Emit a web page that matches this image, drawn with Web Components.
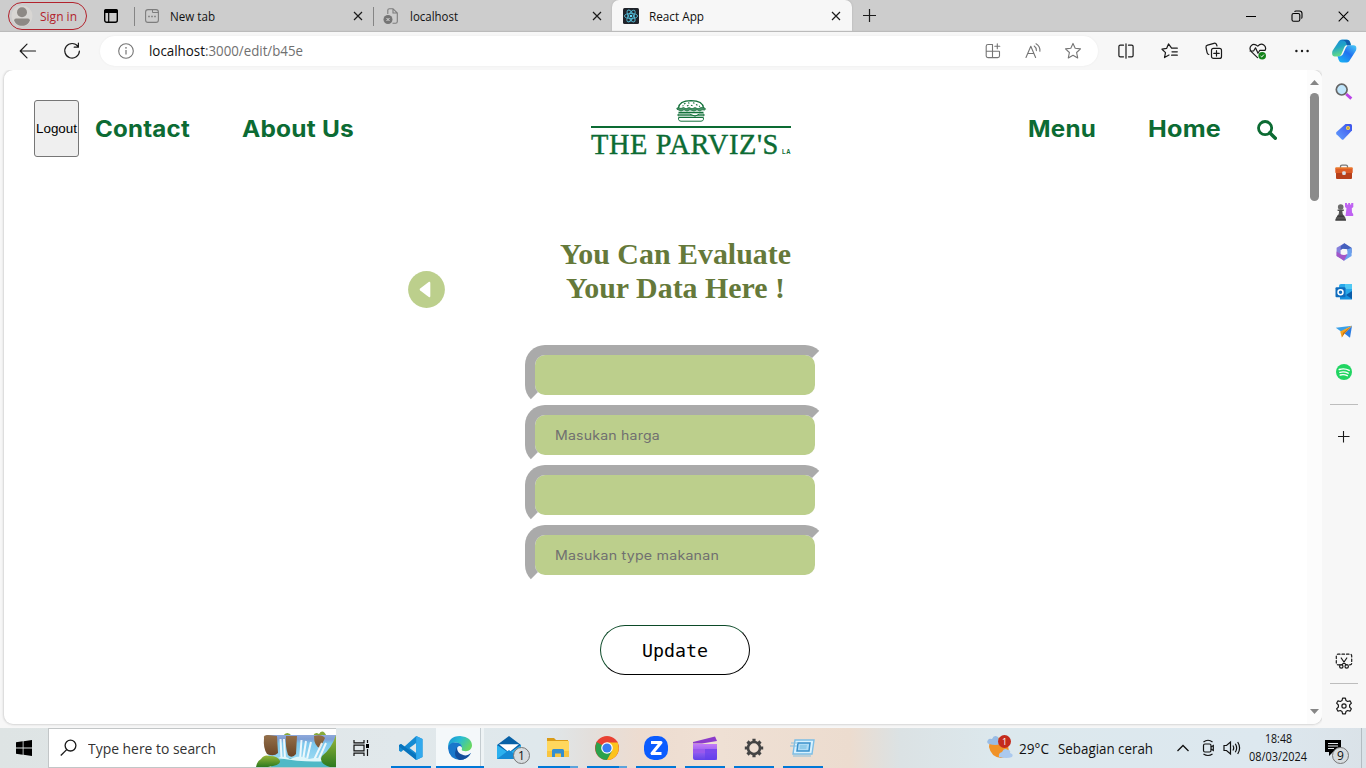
<!DOCTYPE html>
<html lang="en">
<head>
<meta charset="utf-8">
<title>React App</title>
<style>
html,body{margin:0;height:100%;overflow:hidden;background:#f7f7f7}
body{font-family:"Open Sans","Noto Sans",sans-serif}
</style>
</head>
<body>
<browser-window></browser-window>
<script>
/* Icon artwork: [width, height, markup] */
const S='fill="none" stroke="#1b1b1b" stroke-width="1.2" stroke-linecap="round" stroke-linejoin="round"';
const G='fill="none" stroke="#757575" stroke-width="1.1" stroke-linecap="round" stroke-linejoin="round"';
const ICONS={
avatar:[22,22,'<circle cx="11" cy="11" r="10.5" fill="#d8d6d3"/><circle cx="11" cy="7.3" r="5" fill="#8d8985"/><path d="M3.2 15.2Q3.2 13.6 5 13.6H17Q18.8 13.6 18.8 15.2C18 18.5 15 20.8 11 20.8S4 18.5 3.2 15.2Z" fill="#8d8985"/>'],
workspace:[16,16,'<rect x="1.7" y="1.7" width="12.6" height="12.6" rx="2" fill="none" stroke="#000" stroke-width="1.4"/><path d="M1 5V3Q1 1 3 1H13Q15 1 15 3V5Z"/><path d="M5.7 5V14.5" stroke="#000" stroke-width="1.2"/>'],
newtab:[14,14,'<rect x=".6" y=".6" width="12.8" height="12.8" rx="2.4" fill="none" stroke="#7d7d7d" stroke-width="1.1"/><path d="M7.5 .8V3.5H13.4" fill="none" stroke="#7d7d7d"/><path d="M3.2 7.5H4.8M6.2 7.5H7.8M9.2 7.5H10.8" stroke="#7d7d7d" stroke-width="1.5"/>'],
broken:[16,16,'<path d="M4.8 6V2.3Q4.8.7 6.4.7H10L14.3 5V13.4Q14.3 15.2 12.5 15.2H9.5M10 .8V5H14" fill="none" stroke="#7d7d7d" stroke-width="1.1"/><circle cx="5" cy="11.5" r="4.5" fill="#757575"/><path d="M3.5 10L6.5 13M6.5 10L3.5 13" stroke="#ddd"/>'],
react:[16,16,'<rect width="16" height="16" rx="1.5" fill="#20232a"/><g fill="none" stroke="#53b9d4" stroke-width=".9"><ellipse cx="8" cy="8" rx="6.6" ry="2.6"/><ellipse cx="8" cy="8" rx="6.6" ry="2.6" transform="rotate(60 8 8)"/><ellipse cx="8" cy="8" rx="6.6" ry="2.6" transform="rotate(120 8 8)"/></g><circle cx="8" cy="8" r="1.3" fill="#61dafb"/>'],
close:[10,10,'<path d="M1 1L9 9M9 1L1 9" stroke="#1b1b1b" stroke-width="1.2"/>'],
plus:[14,14,'<path d="M6.5 0V13M0 6.5H13" stroke="#1b1b1b" stroke-width="1.2"/>'],
plusS:[12,12,'<path d="M5.5 -.5V11.5M-.5 5.5H11.5" stroke="#1b1b1b" stroke-width="1.1"/>'],
min:[10,10,'<path d="M0 5.5H10" stroke="#000"/>'],
restore:[12,12,'<rect x="1" y="3.5" width="7.8" height="7.8" rx="1.6" fill="none" stroke="#000" stroke-width="1.1"/><path d="M3.5 1.6Q4 1 5 1H8.5Q11 1 11 3.5V7Q11 8 10.4 8.5" fill="none" stroke="#000" stroke-width="1.1"/>'],
winclose:[11,11,'<path d="M.7 .7L10.3 10.3M10.3 .7L.7 10.3" stroke="#000" stroke-width="1.1"/>'],
back:[18,16,`<path d="M16.5 8H1.5M8 1.2L1.2 8L8 14.8" ${S}/>`],
reload:[18,18,`<path d="M15 4.5A7.3 7.3 0 1 0 16.4 9M15.4 1.2V5.2H11.2" ${S} stroke-width="1.3"/>`],
info:[16,16,`<circle cx="8" cy="8" r="7.3" ${G}/><path d="M8 7V11.6" stroke="#757575" stroke-width="1.2"/><circle cx="8" cy="4.8" r=".85" fill="#757575"/>`],
apps:[16,16,`<path d="M7.5 1.5H3Q1.2 1.5 1.2 3.3V13Q1.2 14.6 3 14.6H12.6Q14.5 14.6 14.5 13V8.5M1.2 8.3H14.2M7.5 1.5V14.6M12.3 .8V5.8M9.8 3.3H14.8" ${G}/>`],
read:[16,16,`<path d="M1 14.5L5.8 3.2L10.6 14.5M2.8 10.5H8.8M9.2 3Q11.4 4.5 11.4 7.6M11 .8Q15.2 3 14.9 8.2" ${G} stroke-width="1.2"/>`],
star:[18,18,`<path d="M9 1.4L11.2 6.2L16.5 6.9L12.6 10.5L13.7 15.9L9 13.2L4.3 15.9L5.4 10.5L1.5 6.9L6.8 6.2Z" ${G} stroke-width="1.2"/>`],
split:[16,16,`<path d="M5.5 2.2H2.3Q.9 2.2 .9 3.6V12.4Q.9 13.8 2.3 13.8H5.5M10.5 2.2H13.7Q15.1 2.2 15.1 3.6V12.4Q15.1 13.8 13.7 13.8H10.5M8 .8V15.2" ${S}/>`],
favs:[18,16,`<path d="M16.3 5.2H10.6L7.5 .9L5.6 5.4L1 6.2L4.5 9.6L3.5 14.6L8 12M11 8.8H16.3M10.6 12.2H16.3" ${S}/>`],
collect:[18,18,`<rect x="6.5" y="6.4" width="10" height="10" rx="2" ${S}/><path d="M11.5 8.7V14.1M8.8 11.4H14.2M3.8 12.5Q2.4 12 2.1 10.6L1 5.5Q.7 3.6 2.6 3.1L9 1.3Q11 .9 11.6 2.8L12 4" ${S}/>`],
health:[18,18,`<path d="M8.5 15.6L2.3 9.6C-1 5.5 3.4-.4 8.8 4.1C13-.4 18.2 4.4 16 8.4M1 9H4.6L6.5 5.8L9 11.3L10.8 8.3H16" ${S}/><circle cx="13.2" cy="13.8" r="3.8" fill="#14841b"/><path d="M11.6 14L12.7 15L14.9 12.6" stroke="#fff" fill="none"/>`],
dots:[16,4,'<g fill="#1b1b1b"><circle cx="2.4" cy="2" r="1.2"/><circle cx="8" cy="2" r="1.2"/><circle cx="13.6" cy="2" r="1.2"/></g>'],
copilot:[26,24,'<defs><linearGradient id="a" x1="0" y1="0" x2=".3" y2="1"><stop stop-color="#1a88dc"/><stop offset=".5" stop-color="#22a6c4"/><stop offset="1" stop-color="#68dd83"/></linearGradient><linearGradient id="b" x1="0" y1="1" x2=".8" y2="0"><stop stop-color="#18bcf4"/><stop offset=".6" stop-color="#2172f0"/><stop offset="1" stop-color="#43bdf5"/></linearGradient></defs><path d="M8 2Q9 .5 11 .5H16Q18.5 .5 19.2 3L20 6H16.5Q14 6 13 9L10.5 15Q9.6 17.5 7 17.5H3.5Q.2 17 1.4 12Z" fill="url(#a)"/><path d="M9 1H16.5Q18.5 1 19.2 4L20 6.5H16L14.8 3Q13.6 1 9 1Z" fill="#135dad"/><path d="M18 22.5Q17 23.5 15.5 23.5H11Q8.5 23.5 7.7 21L6.5 17.2H9.3Q11.6 17 12.5 14L15 8.2Q16 6.2 18.5 6.2H22.5Q26.4 6.5 25 11.5Z" fill="url(#b)"/>'],
sbSearch:[18,18,'<path d="M11.2 11L16.3 15.6" stroke="#bb43e8" stroke-width="3"/><circle cx="6.7" cy="6.6" r="5.4" fill="#bfe5fb" stroke="#666" stroke-width="1.7"/>'],
tag:[18,18,'<defs><linearGradient id="t" x1="0" y1="1" x2="1" y2="0"><stop stop-color="#63a1ff"/><stop offset="1" stop-color="#3b4fea"/></linearGradient></defs><path d="M10.5 1H15.5Q17 1 17 2.5V7.5L8.7 16.3Q7.7 17.3 6.6 16.3L1.5 11.3Q.5 10.2 1.5 9.1Z" fill="url(#t)"/><circle cx="13" cy="5" r="2" fill="#ffda43"/><circle cx="13" cy="5" r=".8" fill="#8d5b36"/>'],
tools:[18,16,'<path d="M5.5 4V2.5Q5.5 1.2 7 1.2H11Q12.5 1.2 12.5 2.5V4" fill="none" stroke="#777" stroke-width="1.3"/><rect x=".3" y="3.6" width="17.4" height="5.6" rx="1" fill="#dd5c25"/><path d="M1 9H17V14Q17 15 16 15H2Q1 15 1 14Z" fill="#b7401a"/><path d="M.5 4H17.5" stroke="#f28a32"/><rect x="7.2" y="7.2" width="3.6" height="3.8" rx="1.3" fill="#d9dfe5"/>'],
chess:[20,20,'<path d="M11 1H13V2.5H14.2V1H16V2.5H17.2V1H19.3V5L17.8 6.2L18 10.5L19.2 12V14H11.5L12.5 6.2L11 5Z" fill="#bf62f2"/><circle cx="6.7" cy="5" r="2.8" fill="#6c6c6c"/><path d="M3.6 7.6H9.8V9H8.3Q8.3 12.5 10 14Q11.9 15 12 18.6H1.4Q1.5 15 3.4 14Q5.2 12.5 5.1 9H3.6Z" fill="#525252"/><path d="M3 14.2H10.4M1.4 18H12" stroke="#333"/>'],
m365:[18,18,'<path d="M9.4 .3L1.6 4.8V12.9L5.6 15.2V6.9L12.8 2.7Z" fill="#8680dc"/><path d="M9.4 .3L16.6 4.8V10L12.4 7.6V6.2L7.6 5.8L5.6 7L5.8 3Z" fill="#4560bd"/><path d="M16.6 5V13L9 17.7L5.6 15.3L12.4 11.3V6.3Z" fill="#6aa1ef"/><path d="M1.6 8.5L6.2 11.6L12.4 11.3L9 17.7L1.6 13Z" fill="#a356c8"/><circle cx="9" cy="9" r="2.9" fill="#f7f7f7"/>'],
outlook:[18,18,'<path d="M4 3Q4 1 6 1H15.3Q17 1 17 3V16H5Z" fill="#28a8ea"/><path d="M10 1H17V6H10Z" fill="#50c9f4"/><path d="M5 9L17 15.5V16.5H5Z" fill="#1490df"/><path d="M17 8L11 12L17 16Z" fill="#0a5ca8"/><rect x=".5" y="4.2" width="10" height="10" rx="1" fill="#0f6cbd"/><circle cx="5.5" cy="9.2" r="2.5" fill="none" stroke="#fff" stroke-width="1.5"/>'],
plane:[18,16,'<path d="M.8 3.8L17 1.8L6.4 7.8Z" fill="#3aa0e8"/><path d="M17 1.8L15 13.8L9.5 9.5Z" fill="#2b7de3"/><path d="M17 1.8L5.2 7.6L6.8 13.4L9.4 9.2Z" fill="#f8a41f"/><path d="M6.8 13.4L8.2 8.8L17 1.8L9.6 9.6Z" fill="#c9720f"/>'],
spotify:[18,18,'<circle cx="9" cy="9" r="8" fill="#20d562"/><path d="M4.2 6.5Q9.5 4.8 14.2 7.4M4.8 9.4Q9 8 13.2 10.2M5.2 12Q9 11 12.3 12.7" stroke="#fff" fill="none" stroke-width="1.4" stroke-linecap="round"/>'],
snip:[18,17,`<path d="M5 11.8H3Q1.3 11.8 1.3 10.2V3Q1.3 1.2 3 1.2H15Q16.7 1.2 16.7 3V10.2Q16.7 11.8 15 11.8H13" ${S} stroke-width="1.3" stroke-dasharray="2.5 2"/><path d="M6.2 5L11 12M11.8 5L7 12" ${S}/><circle cx="6.3" cy="13.4" r="1.7" ${S}/><circle cx="11.7" cy="13.4" r="1.7" ${S}/>`],
gear:[18,18,`<path d="M7.6 1.2H10.4L11 3.6L12.6 4.5L15 3.8L16.4 6.2L14.6 8V10L16.4 11.8L15 14.2L12.6 13.5L11 14.4L10.4 16.8H7.6L7 14.4L5.4 13.5L3 14.2L1.6 11.8L3.4 10V8L1.6 6.2L3 3.8L5.4 4.5L7 3.6Z" ${S} stroke-width="1.3"/><circle cx="9" cy="9" r="2.1" ${S} stroke-width="1.3"/>`],
up:[9,5,'<path d="M0 5L4.5 0L9 5Z" fill="#868686"/>'],
down:[9,5,'<path d="M0 0L4.5 5L9 0Z" fill="#868686"/>'],
find:[20,20,'<circle cx="8.1" cy="8.1" r="6.6" fill="none" stroke="#0c6b33" stroke-width="2.8"/><path d="M12.8 12.8L18.3 18.3" stroke="#0c6b33" stroke-width="3.4" stroke-linecap="round"/>'],
burger:[32,22,'<g fill="none" stroke="#13703a"><path d="M3.5 8Q4 1 16 .7Q28 1 28.5 8" stroke-width="1.2"/><path d="M2 9.3Q1 7.5 3.5 7.8L6 8.5L8.5 7.5L11 8.8L14 7.6L17 8.8L20 7.6L23 8.8L26 7.6L29.5 7.8Q31.5 9.5 29.5 10L27 9.8L25 11L22 9.8L19 11L15 9.8L12 11L9 9.8L6 11Z" fill="#4d9369" stroke-width=".8"/><path d="M3.5 12.5H28.5" stroke-width="1.7"/><path d="M3 14.2H15L20 16.2L24 14.2H29V15.8H3ZM3.6 17.5H28.4V19.5Q28 21.2 26 21.2H6Q4 21.2 3.6 19.5Z" stroke-width="1"/><path d="M9 4L10.5 3.3M13 2.8L14.5 3.3M18 2.7L19.5 3.3M12 6L13.5 5.2M16 5.2L17.5 5.8M21 4.5L22.5 5.3M7.5 6L8.5 5.6M24 6L25 6.6" stroke-width="1.1"/></g>'],
prev:[37,37,'<circle cx="18.5" cy="18.5" r="18.4" fill="#bccf8c"/><path d="M21 10.8Q22.3 10.4 22.3 12V25Q22.3 26.8 20.8 26L12.2 19.6Q11 18.6 12.2 17.6Z" fill="#fff"/>'],
windows:[16,16,'<path d="M0 2.3L6.7 1.3V7.6H0ZM7.5 1.2L16 0V7.6H7.5ZM0 8.4H6.7V14.7L0 13.7ZM7.5 8.4H16V16L7.5 14.8Z" fill="#000"/>'],
lens:[18,18,'<circle cx="10.5" cy="6.6" r="5.4" fill="none" stroke="#1a1a1a" stroke-width="1.3"/><path d="M6.7 10.6L.8 16.5" stroke="#1a1a1a" stroke-width="1.3"/>'],
falls:[80,36,'<defs><linearGradient id="w" x1="0" y1="0" x2="0" y2="1"><stop stop-color="#8fa9dc"/><stop offset=".15" stop-color="#7f9fd4"/><stop offset=".3" stop-color="#7cc8ee"/><stop offset="1" stop-color="#9fdcf2"/></linearGradient><linearGradient id="r" x1="0" y1="0" x2="0" y2="1"><stop stop-color="#94704a"/><stop offset="1" stop-color="#6a4426"/></linearGradient><linearGradient id="g" x1="0" y1="0" x2="0" y2="1"><stop stop-color="#9ab83a"/><stop offset="1" stop-color="#2c7a20"/></linearGradient></defs><path d="M27 5Q31-1 36 5ZM57 5Q59 0 63 3Q67-3 71 6Z" fill="#86aa3a"/><path d="M10 4H80V26L70 32H20L12 24Z" fill="url(#w)"/><path d="M8 7Q7 4 12 4L21 5L22 22Q18 26 11 23Q7 17 8 7ZM30 5H41L40 23Q36 28 32 24Q29 15 30 5ZM58 5Q66 3 69 7L64 17Q58 15 58 5Z" fill="url(#r)"/><path d="M24.5 8L25.5 27M28 8L29 28M45.500 9L44 29M50 10L47 29M55 11L51 28M66 12L58 29M70 12L62 30" stroke="#fff" stroke-width="2" opacity=".85"/><path d="M15 36Q17 28 28 28Q45 25 56 29L80 31V36Z" fill="#4fb9c6"/><path d="M22 27Q28 24 34 28Q44 23 53 28Q64 25 70 30Q50 32 22 27Z" fill="#e0f7fb"/><path d="M80 4V36H74Q62 32 66 25Q76 17 80 4Z" fill="url(#g)"/><path d="M0 36Q1 30 5 28Q8 23 14 25Q22 25 24 30Q25 34 12 36Z" fill="url(#g)"/>'],
taskview:[18,18,'<g fill="none" stroke="#111" stroke-width="1.2"><path d="M1 1V3.8H11V1M1 17V14.2H11V17M1 6.2H11V11.8H1ZM14.500 1V4M14.500 10V17"/></g><rect x="13" y="5" width="3" height="4"/>'],
vscode:[26,26,'<path d="M18.2 1L24.5 4V22L18.2 25L6 14.5L3 17L1 15.8V10.2L3 9L6.500 11.500ZM18.2 8L11.5 13L18.2 18Z" fill="#168bd2" fill-rule="evenodd"/><path d="M1 10L3 9L18.2 20V25L1 11.5Z" fill="#0874bd"/><path d="M18.2 1L24.5 4V22L18.2 25Z" fill="#32a9ed"/>'],
edge:[26,26,'<defs><linearGradient id="e" x1="0" y1="0" x2="1" y2=".5"><stop stop-color="#168fd9"/><stop offset=".5" stop-color="#29bdd1"/><stop offset="1" stop-color="#66d764"/></linearGradient></defs><path d="M1 13Q1 1 13 1Q25 2 25 11Q24 17 17 16Q14 16 15 13.5Q15 8 8.5 7.5Q3.5 8 1 13Z" fill="url(#e)"/><path d="M1 13Q2 7 9 7.5Q15 8 15 12.5Q12 9.5 10 13Q9 20 16 21.5Q20 22 24 18Q20 25 13 25Q2 24 1 13Z" fill="#1877cb"/><path d="M10 12Q5 22 13 25Q20 25 24 18Q20 22 15 19.5Q10 18 10 12Z" fill="#124d9c"/>'],
mail:[26,26,'<path d="M1 10L13 1L25 10V23H1Z" fill="#0861a6"/><path d="M3 9.3H23L13 17.5Z" fill="#fff"/><path d="M1 10L13 18L25 10V24H1Z" fill="#2bb1ef"/><path d="M1 24L13 15L25 24Z" fill="#158ad4"/>'],
folder:[26,26,'<path d="M2 3H9L11 5H23V8H2Z" fill="#d99b18"/><path d="M2 6H24V22H2Z" fill="#ffd75d"/><path d="M2 16H24V22H2Z" fill="#f8c540"/><path d="M7 22V15.500Q7 14 8.5 14H17.5Q19 14 19 15.500V22H16V18.5H10V22Z" fill="#338ed1"/>'],
chrome:[26,26,'<circle cx="13" cy="13" r="12" fill="#e94132"/><path d="M13 13L2.6 7Q-1 17 6 22.8Q9 25 13 25L18.2 16Z" fill="#2ba24c"/><path d="M13 7.5H23.7Q27 17 20 22.8Q17 25 13 25L18 16Z" fill="#fcc31d"/><circle cx="13" cy="13" r="5.8" fill="#fff"/><circle cx="13" cy="13" r="4.6" fill="#377df2"/>'],
zoom:[26,26,'<rect x="1" y="1" width="24" height="24" rx="10" fill="#0b5cff"/><path d="M8 7.5H18L9 18.5H18.5" fill="none" stroke="#fff" stroke-width="3" stroke-linejoin="round"/>'],
clip:[26,26,'<defs><linearGradient id="c" x1="0" y1="0" x2="0" y2="1"><stop stop-color="#c47bf7"/><stop offset="1" stop-color="#6242e8"/></linearGradient></defs><path d="M1 7L23 1.5L25 6L10 8.5H1Z" fill="#8c3bca"/><path d="M1 9H25V23Q25 25 23 25H3Q1 25 1 23Z" fill="url(#c)"/><path d="M1 14H25V18H1Z" fill="#9a58ed"/><path d="M13 14H25V25H13Z" fill="#623eed" opacity=".6"/>'],
cog:[22,22,'<circle cx="11" cy="11" r="6" fill="none" stroke="#444" stroke-width="2.6"/><path d="M11 1.8V4.5M11 17.5V20.2M1.8 11H4.5M17.5 11H20.2M4.5 4.5L6.4 6.4M15.6 15.6L17.5 17.5M17.5 4.5L15.6 6.4M6.4 15.6L4.5 17.5" stroke="#444" stroke-width="3.2"/>'],
run:[26,20,'<path d="M5 2H24L22 16H3Z" fill="#d9f2ff" stroke="#7bbde5" stroke-width="1.4"/><path d="M8 5H20L19 13H7Z" fill="#b0dcf5" stroke="#3b91cc" stroke-width="1.5"/><path d="M10 7H17L16.3 11H9.5Z" fill="#8fcbea"/><path d="M1 5H8M0 8H7M3 18H21" stroke="#89bfdd"/>'],
weather:[28,26,'<path d="M3 12Q3 5 10 3Q21 1 22 11Q25 22 15 23Q5 22 3 12Z" fill="#f09227"/><path d="M3 9Q0 8 2 5Q3 3 6 4Q8-1 12 2L14 9Q10 11 3 9Z" fill="#98bce5"/><path d="M13 22Q12 18 16 17Q18 12 22 15Q25 15 24 18Q28 19 26 22Q21 24 13 22Z" fill="#abc9ee"/>'],
chev:[14,8,'<path d="M1.5 7L7 1.5L12.5 7" fill="none" stroke="#111" stroke-width="1.3"/>'],
camera:[16,18,'<g fill="none" stroke="#111" stroke-width="1.2"><rect x="3.5" y="5" width="7.5" height="8" rx="1.5"/><path d="M11 8L13.3 6.5V11.5L11 10M3.5 3Q8-.5 12.500 3M3.5 15Q8 18 12.500 15"/></g>'],
speaker:[20,16,'<path d="M2 5.5H4.500L8.500 2V14L4.500 10.5H2ZM10.9 5.5Q12.5 8 10.9 10.5M13.3 3.8Q16 8 13.3 12.2M15.7 2Q19.5 8 15.7 14" fill="none" stroke="#111" stroke-width="1.2"/>'],
note:[16,16,'<path d="M0 0H16V12H8L4 16V12H0Z"/><path d="M3 3.5H13M3 6H13M3 8.5H9" stroke="#e5e9ec"/>']
};

function define(name,css,html){
  customElements.define(name,class extends HTMLElement{
    constructor(){
      super();
      const t=document.createElement('template');
      t.innerHTML='<style>'+css+'</style>'+html;
      this.attachShadow({mode:'open'}).append(t.content.cloneNode(true));
    }
  });
}

customElements.define('ui-icon',class extends HTMLElement{
  connectedCallback(){
    if(this.shadowRoot)return;
    const [w,h,m]=ICONS[this.getAttribute('name')];
    this.attachShadow({mode:'open'}).innerHTML=`<style>:host{display:block;flex:none;width:${w}px;height:${h}px}svg{display:block}</style><svg width="${w}" height="${h}" viewBox="0 0 ${w} ${h}">${m}</svg>`;
  }
});

/* A fixed box that centres one icon */
customElements.define('icon-cell',class extends HTMLElement{
  connectedCallback(){
    if(this.shadowRoot)return;
    this.attachShadow({mode:'open'}).innerHTML=`<style>:host{display:flex;flex:none;align-items:center;justify-content:center;width:${this.getAttribute('w')}px;height:${this.getAttribute('h')||'auto'}${this.hasAttribute('h')?'px':''}}</style><ui-icon name="${this.getAttribute('name')}"></ui-icon>`;
  }
});

define('browser-tab',`
:host{display:flex;flex:none;box-sizing:border-box;width:239px;height:32px;align-items:center;padding:0 10px 0 11px;position:relative}
:host([rule])::before{content:"";position:absolute;left:0;top:7px;width:1px;height:19px;background:#858585}
:host([active]){background:#f7f7f7;border-radius:7px 7px 0 0;box-shadow:0 0 2px #aaa;width:240px;padding:0 11px}
.t{flex:1;padding-left:11px}:host([active]) .t{padding-left:10px}`,
`<slot name="icon"></slot><div class="t"><slot></slot></div><ui-icon name="close"></ui-icon>`);

define('tab-strip',`
:host{display:flex;height:32px;background:#cdcdcd;align-items:center;font-size:12px;color:#111}
.sign{box-sizing:border-box;width:79px;height:28px;border:1.4px solid #b2222c;border-radius:14px;margin-left:8px;display:flex;align-items:center;gap:7px;padding-left:2px;color:#b2222c}
.ws{width:16px;margin:0 15px 0 16px}.b{margin-left:-1px}.sp{flex:1}`,
`<div class="sign"><ui-icon name="avatar"></ui-icon><fit-text w="37">Sign in</fit-text></div>
<ui-icon class="ws" name="workspace"></ui-icon>
<browser-tab rule><ui-icon slot="icon" name="newtab"></ui-icon><fit-text w="45">New tab</fit-text></browser-tab>
<browser-tab rule><ui-icon class="b" slot="icon" name="broken"></ui-icon><fit-text w="48">localhost</fit-text></browser-tab>
<browser-tab active><ui-icon slot="icon" name="react"></ui-icon><fit-text w="55">React App</fit-text></browser-tab>
<icon-cell name="plus" w="36"></icon-cell><span class="sp"></span>
<icon-cell name="min" w="46"></icon-cell><icon-cell name="restore" w="46"></icon-cell><icon-cell name="winclose" w="46"></icon-cell>`);

define('tool-bar',`
:host{display:flex;height:38px;background:#f7f7f7;align-items:center;padding-left:6px;box-shadow:0 -1px 1px #bbb;position:relative;clip-path:inset(-2px 0 0 0)}
.addr{display:flex;align-items:center;height:30px;width:998px;box-sizing:border-box;background:#fff;border-radius:15px;margin:0 6px;padding:0 5px 0 18px;box-shadow:0 0 2px #e8e8e8}
.url{margin-left:15px;flex:1;display:flex;font-size:14px;line-height:20px;height:20px;color:#111}.g{color:#707070}`,
`<icon-cell name="back" w="44"></icon-cell><icon-cell name="reload" w="44"></icon-cell>
<div class="addr"><ui-icon name="info"></ui-icon><div class="url"><fit-text w="56">localhost</fit-text><fit-text class="g" w="98">:3000/edit/b45e</fit-text></div>
<icon-cell name="apps" w="40"></icon-cell><icon-cell name="read" w="40"></icon-cell><icon-cell name="star" w="40"></icon-cell></div>
<icon-cell name="split" w="43"></icon-cell><icon-cell name="favs" w="45"></icon-cell><icon-cell name="collect" w="44"></icon-cell><icon-cell name="health" w="44"></icon-cell><icon-cell name="dots" w="44"></icon-cell><icon-cell name="copilot" w="40"></icon-cell>`);

define('side-bar',`
:host{display:flex;flex-direction:column;width:44px;height:658px;box-sizing:border-box;padding-top:2px;background:#f7f7f7;align-items:center}
i{width:28px;height:1px;background:#bdbdbd;flex:none}.sp{flex:1}.l{margin-top:12px;margin-bottom:12px}`,
['sbSearch','tag','tools','chess','m365','outlook','plane','spotify'].map(n=>`<icon-cell name="${n}" w="44" h="40"></icon-cell>`).join('')+
`<i class="l"></i><icon-cell name="plusS" w="44" h="40"></icon-cell><span class="sp"></span>
<icon-cell name="snip" w="44" h="44"></icon-cell><i></i><icon-cell name="gear" w="44" h="44"></icon-cell>`);

define('scroll-bar',`
:host{display:flex;flex-direction:column;align-items:center;width:15px;background:#fcfcfc;padding:10px 0;box-sizing:border-box}
b{width:9px;height:108px;border-radius:5px;background:#8b8b8b;margin-top:8px}.sp{flex:1}`,
`<ui-icon name="up"></ui-icon><b></b><span class="sp"></span><ui-icon name="down"></ui-icon>`);

define('brand-logo',`
:host{display:flex;flex-direction:column;align-items:center;width:200px;color:#0c6b33}
.bar{width:200px;height:2px;background:#0c6b33;margin-top:4px}
.n{display:flex;align-items:baseline;width:200px;gap:3px;height:31px;font:28.5px/33px "Liberation Serif",serif;letter-spacing:.6px;-webkit-text-stroke:.4px #0c6b33}
.la{font:bold 6.5px "Liberation Sans",sans-serif;-webkit-text-stroke:0}`,
`<ui-icon name="burger"></ui-icon><div class="bar"></div><div class="n"><fit-text w="188">THE PARVIZ'S</fit-text><fit-text class="la" w="9">LA</fit-text></div>`);

define('site-nav',`
:host{display:flex;align-items:flex-start;height:57px;padding:30px 30px 0 30px;color:#0c6b33;font:bold 22.5px/58px Inter,sans-serif;letter-spacing:.2px}
button{box-sizing:border-box;width:45px;height:57px;border:1px solid #767676;border-radius:3px;background:#efefef;padding:0;font:13.33px "Liberation Sans",Arial,sans-serif;color:#000;display:flex;justify-content:center;align-items:center}
.a{margin-left:16px}.b{margin-left:52px}.logo{margin-left:237px}.m{margin-left:237px}.h{margin-left:52px}.f{margin:20px 0 0 36px}`,
`<button><fit-text w="41">Logout</fit-text></button><fit-text class="a" w="95">Contact</fit-text><fit-text class="b" w="112">About Us</fit-text>
<brand-logo class="logo"></brand-logo><fit-text class="m" w="68">Menu</fit-text><fit-text class="h" w="73">Home</fit-text><ui-icon class="f" name="find"></ui-icon>`);

define('form-field',`
:host{display:block}
div{box-sizing:border-box;width:300px;height:60px;border:10px solid #aaa;border-right-color:transparent;border-bottom-color:transparent;border-radius:20px;background:#bccf8c;background-clip:padding-box;padding-left:20px;font:400 12.8px/41px Inter,sans-serif;letter-spacing:.2px;color:#707070}`,
`<div><slot></slot></div>`);

define('edit-form',`
:host{display:grid;grid-template-columns:117px 300px;margin:80px 0 0 404px}
.p{margin-top:34px}
h1{margin:0;height:108px;font:bold 29.5px/34px "Liberation Serif",serif;color:#65793a;display:flex;flex-direction:column;align-items:center}
.btn{box-sizing:border-box;width:150px;height:50px;margin:40px auto 0;border:1px solid #000;border-top-color:#0c4a28;border-left-color:#0c4a28;border-radius:25px;background:#fff;display:flex;justify-content:center;align-items:center;font:18px "DejaVu Sans Mono",monospace;color:#000}`,
`<ui-icon class="p" name="prev"></ui-icon><div><h1><fit-text w="231">You Can Evaluate</fit-text><fit-text w="219">Your Data Here !</fit-text></h1>
<form-field></form-field><form-field><fit-text w="105">Masukan harga</fit-text></form-field><form-field></form-field><form-field><fit-text w="164">Masukan type makanan</fit-text></form-field>
<div class="btn"><fit-text w="66">Update</fit-text></div></div>`);

define('web-page',`
:host{display:flex;width:1318px;height:654px;background:#fff;border-radius:9px;overflow:hidden;box-shadow:0 0 2px 1px #d5d5d5}
main{width:1303px}`,
`<main><site-nav></site-nav><edit-form></edit-form></main><scroll-bar></scroll-bar>`);

define('task-item',`
:host{display:grid;place-items:center;width:49px;height:40px;flex:none;position:relative;box-sizing:border-box;padding-right:2px}
:host([run])::after{content:"";position:absolute;left:4px;bottom:0;width:40px;height:2px;background:#0078d7}
:host([multi])::after{background:linear-gradient(90deg,#0078d7 32px,#5ba3dc 32px)}
:host([on]){background:linear-gradient(90deg,#f4f8fa 44px,#c4ccd0 44px 45px,#eef3f5 45px 48px,transparent 48px)}
:host([on])::after{left:0;width:48px}`,`<slot></slot>`);

define('count-badge',`
:host{position:absolute;box-sizing:border-box;width:17px;height:17px;border-radius:50%;background:#d7dcdf;border:1px solid #777;font-size:12px;line-height:15px;text-align:center;color:#111}
:host([red]){background:#c42b1c;border:0;width:13px;height:13px;color:#fff;font-size:9px;line-height:13px}`,`<slot></slot>`);

define('task-bar',`
:host{display:flex;height:40px;align-items:center;font-size:14px;color:#111;background:linear-gradient(90deg,#dee4e4 0,#e1e8eb 400px,#dfe8ec 540px,#e3dfdc 590px,#eddcd0 640px,#efe0d4 720px,#ecdccf 850px,#dbe2e4 900px,#dce8ed 1000px,#dde8ef 1260px,#dae2e8 1366px)}
.s{box-sizing:border-box;display:flex;align-items:center;width:288px;height:40px;background:#fff;border:1px solid #c2c6c7;border-right:0;padding-left:11px}
.s fit-text{margin-left:10px;flex:1!important;color:#333}.f{align-self:flex-end}
.sp{flex:1}.wx{position:relative;margin-right:5px}.c{margin-left:9px}.ck{width:66px;font-size:12px;line-height:18px;display:flex;flex-direction:column;align-items:center;margin-left:1px}
.nt{position:relative;margin-left:14px}.end{width:1px;height:40px;background:#b4bcc2;margin:0 4px 0 20px}.ch{margin-left:17px}`,
`<icon-cell name="windows" w="48"></icon-cell><div class="s"><ui-icon name="lens"></ui-icon><fit-text w="128">Type here to search</fit-text><ui-icon class="f" name="falls"></ui-icon></div>
<icon-cell name="taskview" w="51"></icon-cell>
<task-item run><ui-icon name="vscode"></ui-icon></task-item><task-item run on><ui-icon name="edge"></ui-icon></task-item>
<task-item><ui-icon name="mail"></ui-icon><count-badge style="left:28px;top:19px">1</count-badge></task-item>
<task-item run multi><ui-icon name="folder"></ui-icon></task-item><task-item run multi><ui-icon name="chrome"></ui-icon></task-item>
<task-item run><ui-icon name="zoom"></ui-icon></task-item><task-item run><ui-icon name="clip"></ui-icon></task-item>
<task-item run><ui-icon name="cog"></ui-icon></task-item><task-item run><ui-icon name="run"></ui-icon></task-item>
<span class="sp"></span><div class="wx"><ui-icon name="weather"></ui-icon><count-badge red style="left:12px;top:0">1</count-badge></div>
<fit-text w="30">29°C</fit-text><fit-text class="c" w="95">Sebagian cerah</fit-text>
<icon-cell class="ch" name="chev" w="26"></icon-cell><icon-cell name="camera" w="24"></icon-cell><icon-cell name="speaker" w="24"></icon-cell>
<div class="ck"><fit-text w="27">18:48</fit-text><fit-text w="58">08/03/2024</fit-text></div>
<div class="nt"><ui-icon name="note"></ui-icon><count-badge style="left:7px;top:7px">9</count-badge></div><span class="end"></span>`);

define('browser-window',`
:host{display:grid;grid-template-rows:32px 38px 658px 40px;width:1366px;height:768px;background:#f7f7f7}
.mid{display:flex;padding-left:4px}`,
`<tab-strip></tab-strip><tool-bar></tool-bar><div class="mid"><web-page></web-page><side-bar></side-bar></div><task-bar></task-bar>`);

/* Text scaled horizontally to a given run width; registered last so its surroundings are laid out */
customElements.define('fit-text',class extends HTMLElement{
  connectedCallback(){
    if(this.shadowRoot)return;
    const w=+this.getAttribute('w');
    this.attachShadow({mode:'open'}).innerHTML=`<style>:host{display:block;flex:none;width:${w}px;white-space:nowrap}span{display:inline-block;transform-origin:0 50%}</style><span><slot></slot></span>`;
    const s=this.shadowRoot.querySelector('span');
    s.style.transform=`scaleX(${w/s.getBoundingClientRect().width})`;
  }
});
</script>
</body>
</html>
